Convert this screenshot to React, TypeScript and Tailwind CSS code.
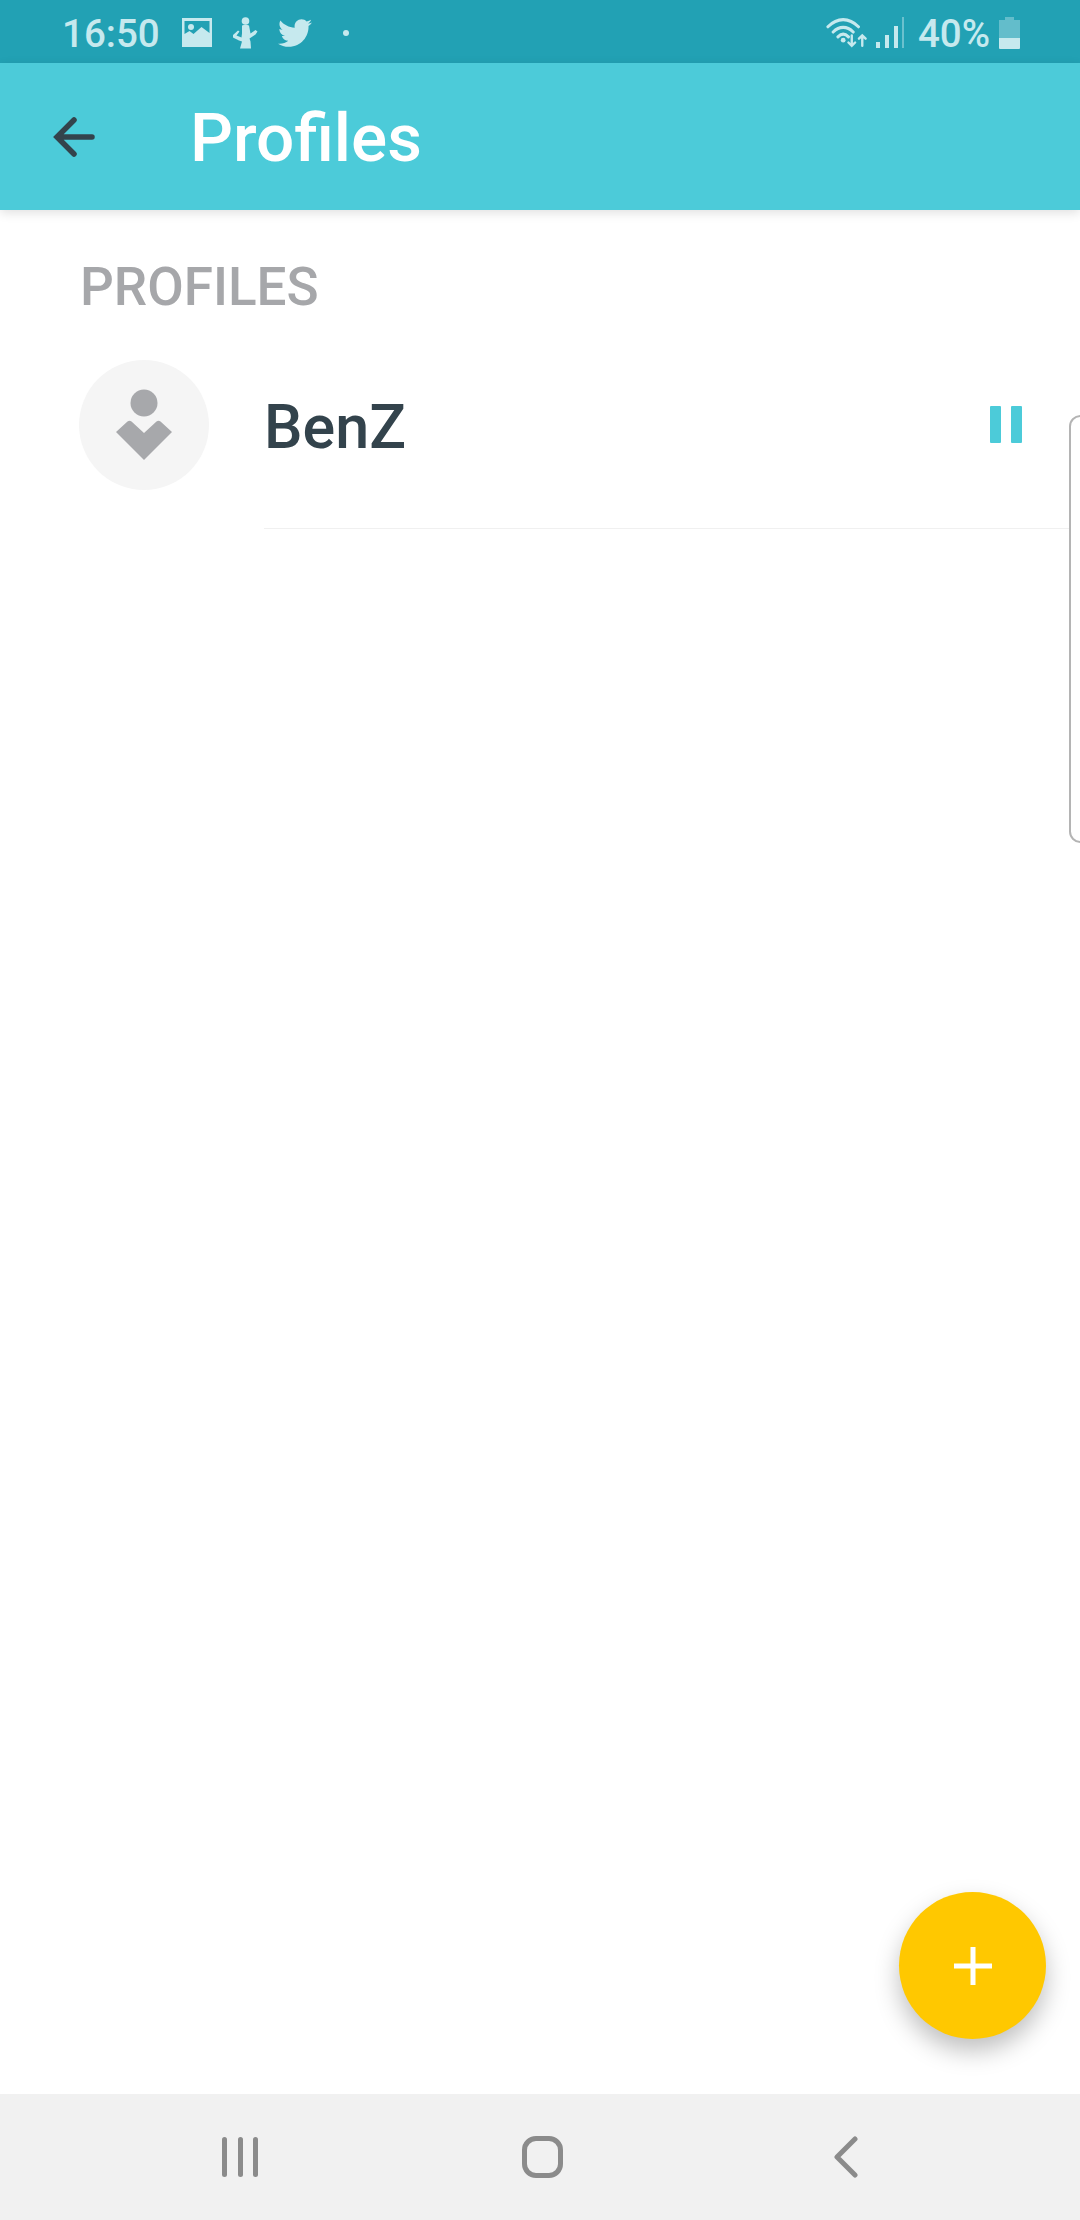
import { FaTwitter } from "react-icons/fa";

function StatusBar() {
  return (
    <div className="flex h-[63px] shrink-0 items-center bg-[#22a1b4] pl-[62px] pr-[60px] pt-[2px] text-[#c6e9ee]">
      <span className="mt-[3px] text-[38.5px] font-medium leading-none">16:50</span>
      <svg viewBox="0 0 30 30" className="ml-[22px] h-[30px] w-[30px]">
        <path fillRule="evenodd" fill="currentColor" d="M0 0h30v29H0zM2.500 3v13l5-3 4 3 8-7 8 6V3z" />
        <circle cx="9" cy="9" r="3" fill="currentColor" />
      </svg>
      <svg viewBox="0 0 26 32" className="ml-[20px] h-[32px] w-[26px]">
        <circle cx="13.500" cy="4" r="3.800" fill="currentColor" />
        <path fill="currentColor" d="M10 8.500c2-1 5-1 7 0l1.500 8 5-3.500 2 1.500-2 3-6 4 1 3 .5 7H8l2-7-3-1-6-3 0-2.500 5-4.500 1.500 1-3 4 5 2 .5-4z" />
      </svg>
      <FaTwitter className="ml-[20px] h-[34px] w-[34px]" />
      <span className="ml-[31px] h-[6px] w-[6px] rounded-full bg-current" />
      <div className="flex-1" />
      <svg viewBox="0 0 44 32" className="h-[31px] w-[42px]" fill="none" stroke="currentColor" strokeLinecap="round">
        <path strokeWidth="3.200" d="M2 10C12 0 24 0 34 10M7.500 15.500C14 9 22 9 28.500 15.500M12.500 20.500C16 17 20 17 23.500 20.500" />
        <circle cx="18" cy="24" r="2.500" fill="currentColor" stroke="none" />
        <path strokeWidth="2.500" d="M27 19v11M23.500 26.500 27 30l3.500-3.500M38 30V19M34.500 22.500 38 19l3.500 3.500" />
      </svg>
      <svg viewBox="0 0 28 32" className="ml-[8px] h-[32px] w-[28px]" fill="currentColor">
        <rect x="0" y="25" width="4" height="6" />
        <rect x="9" y="18" width="4" height="13" />
        <rect x="18" y="9" width="4" height="22" />
        <rect x="26" y="0" width="2.500" height="31" opacity="0.45" />
      </svg>
      <span className="ml-[14px] mt-[3px] text-[38.5px] font-medium leading-none">40%</span>
      <svg viewBox="0 0 21 32" className="ml-[9px] h-[32px] w-[21px]" fill="currentColor">
        <path opacity="0.4" d="M6 0h9v3h6v18H0V3h6z" />
        <path d="M0 21h21v10a1 1 0 0 1-1 1H1a1 1 0 0 1-1-1z" />
      </svg>
    </div>
  );
}

function AppBar() {
  return (
    <div className="relative z-10 flex h-[147px] shrink-0 items-center bg-[#4ccbd9] pl-[53px] shadow-[0_3px_10px_rgba(0,0,0,0.12)]">
      <svg viewBox="0 0 42 42" className="h-[42px] w-[42px]" fill="none" stroke="#33434c" strokeWidth="5.500" strokeLinecap="round">
        <path d="M39 21H5M21 4 4 21l17 17" />
      </svg>
      <span className="ml-[95px] mt-[2px] text-[67.5px] font-medium leading-none text-white">Profiles</span>
    </div>
  );
}

function ProfileRow() {
  return (
    <div className="flex h-[170px] pl-[79px]">
      <div className="mt-[1px] flex h-[130px] w-[130px] shrink-0 items-center justify-center rounded-full bg-[#f5f5f5]">
        <svg viewBox="0 0 58 72" className="h-[72px] w-[58px]" fill="#a7a8ab">
          <circle cx="29" cy="14" r="13.500" />
          <path d="M1 43 12.500 32.500Q14.500 31 16.500 32.500L29 44 41.500 32.500Q43.500 31 45.500 32.500L57 43 29 71z" />
        </svg>
      </div>
      <div className="ml-[55px] mr-[11px] flex flex-1 border-b border-[#f0f0f0] pb-[1px]">
        <span className="mt-[33px] text-[61px] font-medium leading-[70px] text-[#33434c]">BenZ</span>
        <div className="ml-auto mr-[47px] mt-[47px] flex h-[37px] gap-[10px]">
          <span className="h-[37px] w-[11px] rounded-[1px] bg-[#4ccbd9]" />
          <span className="h-[37px] w-[11px] rounded-[1px] bg-[#4ccbd9]" />
        </div>
      </div>
    </div>
  );
}

function NavBar() {
  return (
    <div className="grid h-[126px] shrink-0 grid-cols-[522px_1fr] items-center bg-[#f1f1f1] pb-[1px]">
      <div className="flex gap-[10.500px] pl-[222px]">
        <span className="h-[40px] w-[5px] rounded-full bg-[#8b8b8b]" />
        <span className="h-[40px] w-[5px] rounded-full bg-[#8b8b8b]" />
        <span className="h-[40px] w-[5px] rounded-full bg-[#8b8b8b]" />
      </div>
      <div className="flex items-center">
        <span className="h-[42px] w-[41px] rounded-[14px] border-[5px] border-[#8b8b8b]" />
        <svg viewBox="0 0 24 42" className="ml-[271px] h-[42px] w-[24px]" fill="none" stroke="#8b8b8b" strokeWidth="5" strokeLinecap="round" strokeLinejoin="round">
          <path d="M21 3 3 21l18 18" />
        </svg>
      </div>
    </div>
  );
}

export default function App() {
  return (
    <div
      className="relative flex h-[2220px] w-[1080px] flex-col overflow-hidden bg-white"
      style={{ fontFamily: "Roboto, sans-serif" }}
    >
      <StatusBar />
      <AppBar />
      <div className="flex-1 bg-white">
        <div className="pl-[80px] pt-[49px] text-[53px] font-medium leading-[56px] text-[#a6a7aa]">PROFILES</div>
        <div className="mt-[44px]">
          <ProfileRow />
        </div>
      </div>
      <NavBar />
      <div className="absolute right-[-12px] top-[415px] h-[428px] w-[23px] rounded-[14px] border-2 border-[#b4b4b4]" />
      <button className="absolute left-[899px] top-[1892px] flex h-[147px] w-[147px] items-center justify-center rounded-full bg-[#ffc800] shadow-[0_12px_24px_rgba(0,0,0,0.25)]">
        <svg viewBox="0 0 38 38" className="h-[38px] w-[38px]" fill="#ffffff">
          <rect x="16.500" y="0" width="5" height="38" />
          <rect x="0" y="16.500" width="38" height="5" />
        </svg>
      </button>
    </div>
  );
}
